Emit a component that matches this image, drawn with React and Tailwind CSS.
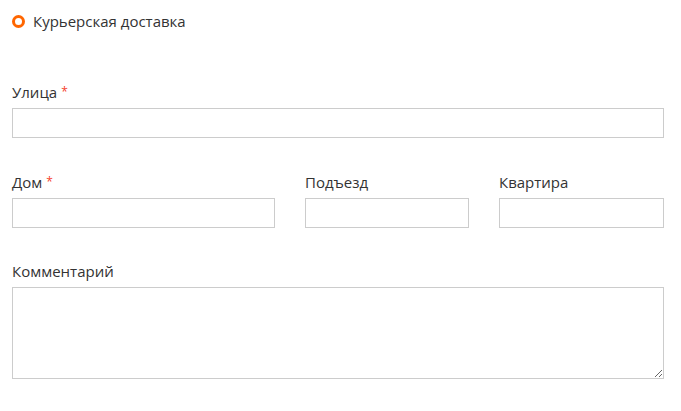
import React from 'react';

const font = { fontFamily: '"Open Sans", sans-serif' };

const Label = ({ children, required }) => (
  <label className="block text-[15px] leading-[18px] text-[#333] mb-[7px]">
    {children}
    {required && <span className="text-[12px] text-[#f5412d] ml-[4px] align-top">*</span>}
  </label>
);

const inputCls =
  'block w-full h-[30px] border border-[#cccccc] bg-white outline-none px-2 text-[14px]';

export default function App() {
  return (
    <div className="w-[681px] h-[411px] bg-white px-[12px] pt-[11px] text-[#333]" style={font}>
      <div className="flex items-center h-[20px]">
        <span className="w-[13px] h-[13px] rounded-full border-[3px] border-[#ff6600] bg-white mr-[8px]" />
        <span className="text-[15px] text-[#333]">Курьерская доставка</span>
      </div>

      <div className="mt-[52px] w-[652px]">
        <Label required>Улица</Label>
        <input className={inputCls} />
      </div>

      <div className="mt-[35px] w-[652px] grid grid-cols-[263px_164px_165px] gap-x-[30px]">
        <div>
          <Label required>Дом</Label>
          <input className={inputCls} />
        </div>
        <div>
          <Label>Подъезд</Label>
          <input className={inputCls} />
        </div>
        <div>
          <Label>Квартира</Label>
          <input className={inputCls} />
        </div>
      </div>

      <div className="mt-[34px] w-[652px]">
        <Label>Комментарий</Label>
        <textarea className="block w-full h-[92px] border border-[#cccccc] bg-white outline-none px-2 text-[14px]" />
      </div>
    </div>
  );
}
